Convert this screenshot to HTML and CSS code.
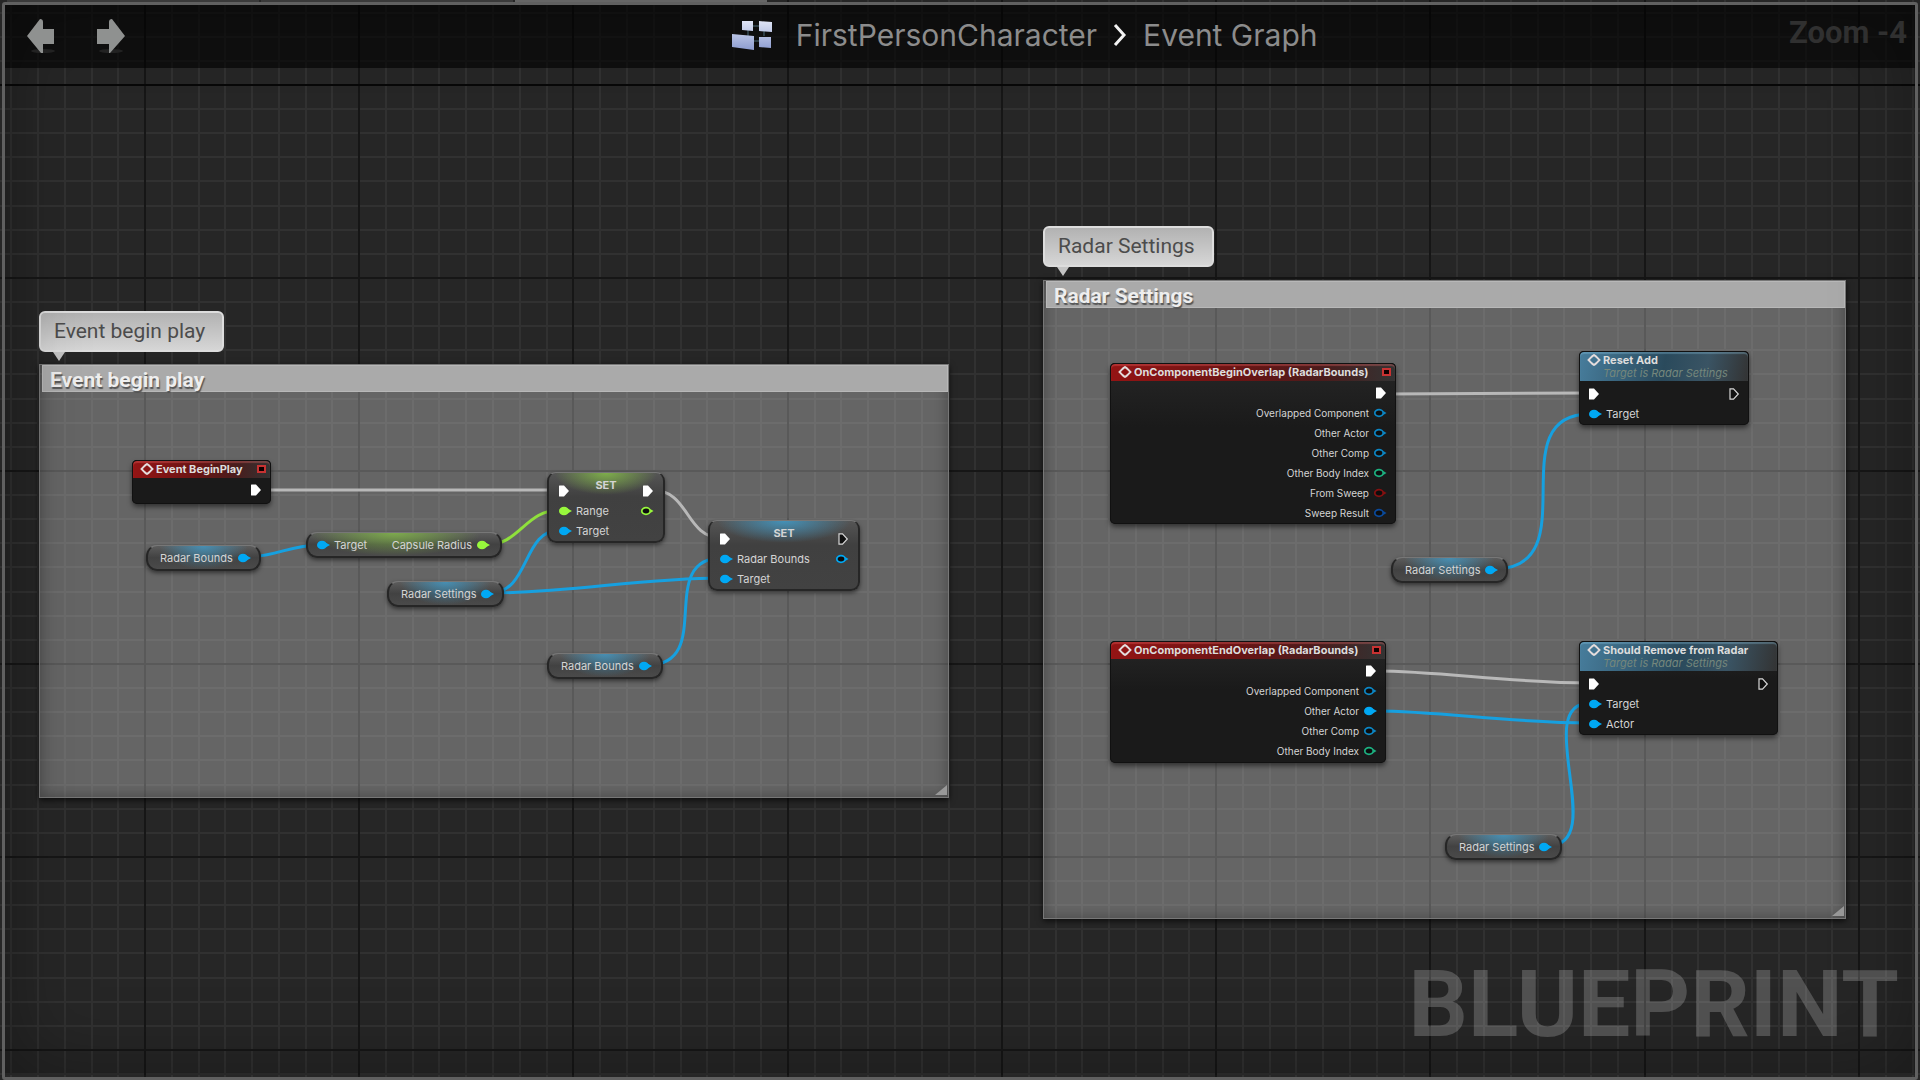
FILE: index.html
```html
<!DOCTYPE html>
<html lang="en">
<head>
<meta charset="utf-8">
<title>FirstPersonCharacter – Event Graph</title>
<link rel="stylesheet" href="styles.css">
</head>
<body>
<svg class="defs" aria-hidden="true">
  <symbol id="exec-on" viewBox="0 0 12 12"><path d="M1.5 .5H6L11 6 6 11.5H1.5Q1 11.500 1 11V1Q1 .5 1.500 .5Z" fill="#fff"/></symbol>
  <symbol id="exec-off" viewBox="0 0 12 12"><path d="M2 .8H5.500L10.300 6 5.500 11.200H2Z" fill="#111" stroke="#d8d8d8" stroke-width="1.200"/></symbol>
  <symbol id="pin-on" viewBox="0 0 14 10"><ellipse cx="6" cy="5" rx="5" ry="4.300" fill="currentColor"/><path d="M9.500 2.500 14 5 9.500 7.500Z" fill="currentColor"/></symbol>
  <symbol id="pin-off" viewBox="0 0 14 10"><ellipse cx="6" cy="5" rx="4.200" ry="3.300" fill="#0d0d0d" stroke="currentColor" stroke-width="1.700"/><path d="M10.300 3 13.500 5 10.300 7Z" fill="currentColor"/></symbol>
  <symbol id="event" viewBox="0 0 14 12"><path d="M6 1.300 1.500 6 6 10.700M8 1.300 12.500 6 8 10.700M4.500 3 7 1 9.500 3M4.500 9 7 11 9.500 9" fill="none" stroke="#e4dcdc" stroke-width="1.900"/></symbol>
</svg>

<main class="editor">
  <div class="tabs"><span></span><span></span><span class="active"></span></div>
  <div class="canvas">
    <svg class="layer" aria-hidden="true">
      <defs>
        <pattern id="grid" x="144" y="84" width="857" height="193" patternUnits="userSpaceOnUse">
          <path class="minor" d="M28 0V193M55 0V193M81 0V193M108 0V193M135 0V193M162 0V193M188 0V193M242 0V193M269 0V193M295 0V193M322 0V193M349 0V193M376 0V193M403 0V193M456 0V193M483 0V193M510 0V193M537 0V193M563 0V193M590 0V193M617 0V193M671 0V193M697 0V193M724 0V193M751 0V193M778 0V193M805 0V193M831 0V193M0 25H857M0 49H857M0 73H857M0 97H857M0 122H857M0 146H857M0 170H857"/>
          <path class="major" d="M1 0V193M215 0V193M429 0V193M644 0V193M0 1H857"/>
        </pattern>
      </defs>
      <rect width="100%" height="100%" fill="url(#grid)"/>
      <rect class="axis" y="84" width="100%" height="2"/>
    </svg>

    <section class="comment c-begin"><h2>Event begin play</h2><svg class="grip" viewBox="0 0 12 10"><path d="M12 0V10H0Z"/></svg></section>
    <p class="bubble b-begin">Event begin play</p>
    <section class="comment c-radar"><h2>Radar Settings</h2><svg class="grip" viewBox="0 0 12 10"><path d="M12 0V10H0Z"/></svg></section>
    <p class="bubble b-radar">Radar Settings</p>

    <svg class="layer wires" aria-hidden="true">
      <g class="exec">
        <path d="M262 490H560"/>
        <path d="M652 490C690 490 685 538 722 538"/>
        <path d="M1386 394L1590 393"/>
        <path d="M1376 671C1440 671 1510 683 1590 683"/>
      </g>
      <path class="float" d="M486 545C520 545 525 510 560 510"/>
      <g class="object">
        <path d="M247 557C275 557 290 545 320 545"/>
        <path d="M490 593C530 593 522 530 560 530"/>
        <path d="M490 593C570 593 640 578 722 578"/>
        <path d="M648 665C716 665 655 558 722 558"/>
        <path d="M1494 569C1590 569 1497 414 1590 414"/>
        <path d="M1376 711C1440 711 1510 723 1590 723"/>
        <path d="M1548 846C1610 846 1530 703 1590 703"/>
      </g>
    </svg>

    <article class="node n-play">
      <header class="red"><svg class="ev"><use href="#event"/></svg><h3>Event BeginPlay</h3><i></i></header>
      <div class="row out"><svg class="ex"><use href="#exec-on"/></svg></div>
    </article>

    <article class="pill n-bounds1"><span>Radar Bounds</span><svg class="pin obj"><use href="#pin-on"/></svg></article>
    <article class="pill green n-capsule"><svg class="pin obj"><use href="#pin-on"/></svg><span>Target</span><span class="end">Capsule Radius</span><svg class="pin flt"><use href="#pin-on"/></svg></article>
    <article class="pill n-settings1"><span>Radar Settings</span><svg class="pin obj"><use href="#pin-on"/></svg></article>
    <article class="pill n-bounds2"><span>Radar Bounds</span><svg class="pin obj"><use href="#pin-on"/></svg></article>
    <article class="pill n-settings2"><span>Radar Settings</span><svg class="pin obj"><use href="#pin-on"/></svg></article>
    <article class="pill n-settings3"><span>Radar Settings</span><svg class="pin obj"><use href="#pin-on"/></svg></article>

    <article class="setter green n-set1">
      <div class="row both"><svg class="ex"><use href="#exec-on"/></svg><h3>SET</h3><svg class="ex"><use href="#exec-on"/></svg></div>
      <div class="row"><svg class="pin flt"><use href="#pin-on"/></svg><span>Range</span><svg class="pin flt last"><use href="#pin-off"/></svg></div>
      <div class="row"><svg class="pin obj"><use href="#pin-on"/></svg><span>Target</span></div>
    </article>
    <article class="setter n-set2">
      <div class="row both"><svg class="ex"><use href="#exec-on"/></svg><h3>SET</h3><svg class="ex"><use href="#exec-off"/></svg></div>
      <div class="row"><svg class="pin obj"><use href="#pin-on"/></svg><span>Radar Bounds</span><svg class="pin obj last"><use href="#pin-off"/></svg></div>
      <div class="row"><svg class="pin obj"><use href="#pin-on"/></svg><span>Target</span></div>
    </article>

    <article class="node n-overlap">
      <header class="red"><svg class="ev"><use href="#event"/></svg><h3>OnComponentBeginOverlap (RadarBounds)</h3><i></i></header>
      <div class="row out"><svg class="ex"><use href="#exec-on"/></svg></div>
      <div class="row out"><span>Overlapped Component</span><svg class="pin dim"><use href="#pin-off"/></svg></div>
      <div class="row out"><span>Other Actor</span><svg class="pin dim"><use href="#pin-off"/></svg></div>
      <div class="row out"><span>Other Comp</span><svg class="pin dim"><use href="#pin-off"/></svg></div>
      <div class="row out"><span>Other Body Index</span><svg class="pin int"><use href="#pin-off"/></svg></div>
      <div class="row out"><span>From Sweep</span><svg class="pin bool"><use href="#pin-off"/></svg></div>
      <div class="row out"><span>Sweep Result</span><svg class="pin struct"><use href="#pin-off"/></svg></div>
    </article>
    <article class="node n-end">
      <header class="red"><svg class="ev"><use href="#event"/></svg><h3>OnComponentEndOverlap (RadarBounds)</h3><i></i></header>
      <div class="row out"><svg class="ex"><use href="#exec-on"/></svg></div>
      <div class="row out"><span>Overlapped Component</span><svg class="pin dim"><use href="#pin-off"/></svg></div>
      <div class="row out"><span>Other Actor</span><svg class="pin obj"><use href="#pin-on"/></svg></div>
      <div class="row out"><span>Other Comp</span><svg class="pin dim"><use href="#pin-off"/></svg></div>
      <div class="row out"><span>Other Body Index</span><svg class="pin int"><use href="#pin-off"/></svg></div>
    </article>

    <article class="node n-reset">
      <header class="blue"><svg class="ev"><use href="#event"/></svg><div><h3>Reset Add</h3><p>Target is Radar Settings</p></div></header>
      <div class="row both"><svg class="ex"><use href="#exec-on"/></svg><svg class="ex"><use href="#exec-off"/></svg></div>
      <div class="row"><svg class="pin obj"><use href="#pin-on"/></svg><span>Target</span></div>
    </article>
    <article class="node n-remove">
      <header class="blue"><svg class="ev"><use href="#event"/></svg><div><h3>Should Remove from Radar</h3><p>Target is Radar Settings</p></div></header>
      <div class="row both"><svg class="ex"><use href="#exec-on"/></svg><svg class="ex"><use href="#exec-off"/></svg></div>
      <div class="row"><svg class="pin obj"><use href="#pin-on"/></svg><span>Target</span></div>
      <div class="row"><svg class="pin obj"><use href="#pin-on"/></svg><span>Actor</span></div>
    </article>
    <div class="vignette"></div>
  </div>

  <header class="bar">
    <div class="history">
      <button type="button" aria-label="Back"><svg viewBox="0 0 30 36"><ellipse cx="17" cy="32" rx="12" ry="2" fill="#222"/><path d="M1 17 14 0Q17 0 17 3V10H28V25H17V34H15Z"/></svg></button>
      <button type="button" aria-label="Forward"><svg viewBox="0 0 30 36"><ellipse cx="15" cy="32" rx="12" ry="2" fill="#222"/><path d="M29 17 16 0Q13 0 13 3V10H1V25H13V34H14Z"/></svg></button>
    </div>
    <nav class="crumbs" aria-label="Breadcrumb">
      <svg class="logo" viewBox="0 0 40 30" aria-hidden="true">
        <defs><linearGradient id="tile" x1="0" y1="0" x2="0" y2="1"><stop offset="0" stop-color="#dfe4f5"/><stop offset="1" stop-color="#8c9cd0"/></linearGradient></defs>
        <path d="M16 10V16M32 10V16M20 6H27M20 21H27" stroke="#4b6a78" stroke-width="1"/>
        <path d="M10 1 21 1V11L10 10ZM27 1 40 2V12L27 11ZM0 14 22 16V30L0 27ZM27 17H39V28L27 27Z" fill="url(#tile)"/>
      </svg>
      <a href="#">FirstPersonCharacter</a>
      <svg class="chev" viewBox="0 0 14 22" aria-hidden="true"><path d="M2 1 11 11 2 21"/></svg>
      <a href="#">Event Graph</a>
    </nav>
    <span class="zoom">Zoom -4</span>
  </header>
  <p class="watermark">BLUEPRINT</p>
</main>
</body>
</html>
```
FILE: styles.css
```css
* { box-sizing: border-box; }
body { margin: 0; background: #1c1c1c; font-family: Inter, "Liberation Sans", sans-serif; }
h2, h3, p { margin: 0; }
.defs { position: absolute; width: 0; height: 0; }

.editor {
  position: relative;
  display: flex;
  flex-direction: column;
  justify-content: space-between;
  min-height: 100vh;
  padding: 5px;
  overflow: hidden;
}
.editor::after {
  content: "";
  position: absolute;
  inset: 2px 2px 0 2px;
  border: 3px solid #606060;
  border-radius: 3px;
  pointer-events: none;
}
.tabs { position: absolute; inset: 0 0 auto 7px; display: flex; gap: 2px; height: 2px; z-index: 1; }
.tabs span { width: 252px; background: #3a3a3a; }
.tabs .active { background: #666; }

.canvas { position: absolute; inset: 0; background: #262626; }
.layer { position: absolute; inset: 0; width: 100%; height: 100%; }
.minor { stroke: #313131; stroke-width: 2px; }
.major { stroke: #161616; stroke-width: 2px; }
.axis { fill: #080808; }
.vignette { position: absolute; inset: 5px; box-shadow: inset 0 0 80px rgba(0, 0, 0, .35); pointer-events: none; }

/* Top bar */
.bar {
  position: relative;
  display: grid;
  grid-template-columns: 38% 1fr auto;
  align-items: center;
  height: 63px;
  padding-right: 8px;
  background: rgba(0, 0, 0, .6);
}
.history { display: flex; gap: 40px; padding-left: 21px; }
.history button { padding: 0; border: 0; background: none; }
.history svg { display: block; width: 30px; height: 36px; fill: #8f9190; }
.crumbs { display: flex; align-items: center; padding: 0 0 4px 4px; }
.crumbs a { color: #8c8c8c; font-size: 30px; line-height: 32px; text-decoration: none; }
.logo { width: 40px; height: 30px; margin-right: 24px; }
.chev { width: 14px; height: 22px; margin: 0 16px; fill: none; stroke: #f2f2f2; stroke-width: 3px; }
.zoom { padding-bottom: 8px; color: #303030; font: 700 31px/32px Roboto, sans-serif; }

.watermark {
  position: relative;
  align-self: flex-end;
  margin: 0 16px 14px 0;
  color: rgba(255, 255, 255, .2);
  font: 700 93px/112px Roboto, sans-serif;
}

/* Comments */
.comment {
  position: absolute;
  border: 1px solid #777;
  background: rgba(255, 255, 255, .29);
  box-shadow: 0 2px 6px rgba(0, 0, 0, .7), inset 0 0 14px rgba(0, 0, 0, .3);
}
.comment h2 {
  height: 27px;
  margin-left: 2px;
  padding-left: 7px;
  border: 1px solid #b8b8b8;
  background: #aaa;
  color: #eee;
  font: 700 21px/28px Roboto, sans-serif;
  text-shadow: 1px 2px 1px #555;
}
.grip { position: absolute; right: 1px; bottom: 2px; width: 12px; height: 10px; fill: #999; }
.c-begin { left: 39px; top: 364px; width: 910px; height: 434px; }
.c-radar { left: 1043px; top: 280px; width: 803px; height: 639px; }
.bubble {
  position: absolute;
  height: 41px;
  padding: 0 13px;
  border: 2px solid #ddd;
  border-radius: 6px;
  background: linear-gradient(#b2b2b2, #d6d6d6);
  color: #4c4c4c;
  font: 400 21px/37px Roboto, sans-serif;
  white-space: nowrap;
}
.bubble::after {
  content: "";
  position: absolute;
  left: 12px;
  top: 39px;
  border: 6px solid transparent;
  border-top: 9px solid #c4c4c4;
  border-bottom: 0;
}
.b-begin { left: 39px; top: 311px; width: 185px; }
.b-radar { left: 1043px; top: 226px; width: 171px; }

/* Wires */
.wires { fill: none; stroke-width: 3px; }
.exec { stroke: #b8b8b8; }
.float { stroke: #8fe03c; }
.object { stroke: #16a0e0; }

/* Nodes */
.node, .setter, .pill { position: absolute; color: #d4d4d4; font-size: 11px; line-height: 20px; white-space: nowrap; }
.node h3, .setter h3 { font-size: 11px; font-weight: 700; }
.node {
  border-radius: 5px;
  background: linear-gradient(#262626, #1a1a1a 40%);
  box-shadow: inset 0 0 0 1px #111, 0 3px 5px rgba(0, 0, 0, .5);
}
.node header {
  display: flex;
  gap: 2px;
  padding: 0 9px 0 7px;
  border: 1px solid #111;
  border-bottom: 0;
  border-radius: 5px 5px 0 0;
}
.node header.red {
  align-items: center;
  height: 18px;
  padding-bottom: 1px;
  background: linear-gradient(90deg, #941414, #6a1414 45%, #4a1c1c 75%, #333);
  box-shadow: inset 0 2px 1px rgba(255, 120, 120, .3);
}
.node header.blue {
  height: 30px;
  margin-bottom: 3px;
  padding-top: 2px;
  background: linear-gradient(100deg, #477d9c, #2a4a5c 50%, #3a5464 75%, #333);
  box-shadow: inset 0 2px 1px rgba(150, 210, 240, .3);
}
.node header h3 { color: #ddd; line-height: 12px; }
.node header p { color: #75877c; font-size: 11px; font-style: italic; line-height: 14px; }
.red + .row { margin-top: 2px; }
.ev { width: 14px; height: 12px; flex: none; }
.node i { width: 9px; height: 8px; margin-left: auto; margin-right: -5px; border: 2px solid #c83232; background: #100; }
.row { display: flex; align-items: center; gap: 4px; height: 20px; padding: 0 9px; }
.row.out { justify-content: flex-end; font-size: 10px; }
.row.both { justify-content: space-between; }
.ex { width: 12px; height: 12px; flex: none; }
.pin { width: 14px; height: 10px; flex: none; }
.last { margin-left: auto; }
.obj { color: #00a8f4; }
.dim { color: #0c86c4; }
.flt { color: #98f83c; }
.int { color: #1cb080; }
.bool { color: #861010; }
.struct { color: #0a4a9c; }

.setter, .pill {
  border: 2px solid #262626;
  border-top: 1px solid #777;
  background:
    radial-gradient(ellipse 40% 100% at 50% 0, rgba(64, 160, 208, .75), transparent),
    linear-gradient(#5c5c5c, #424242 50%, #4a4a4a);
  box-shadow: 0 2px 4px rgba(0, 0, 0, .5);
}
.pill { display: flex; align-items: center; gap: 4px; height: 26px; padding: 0 10px 0 12px; border-radius: 11px; }
.pill .pin { margin-left: auto; }
.pill.green { padding: 0 10px 0 8px; }
.pill.green .pin { margin: 0; }
.pill .end { margin-left: auto; }
.pill.green { background: radial-gradient(ellipse 45% 100% at 45% 0, rgba(136, 196, 72, .75), transparent), linear-gradient(#5c5c5c, #424242 50%, #4a4a4a); }
.setter { height: 71px; padding-top: 8px; border-radius: 9px; background: radial-gradient(ellipse 45% 32% at 50% 0, rgba(64, 160, 208, .8), transparent), linear-gradient(#555, #404040 35%, #424242); }
.setter.green { background: radial-gradient(ellipse 45% 32% at 50% 0, rgba(136, 196, 72, .8), transparent), linear-gradient(#555, #404040 35%, #424242); }
.setter h3 { align-self: flex-start; line-height: 8px; }

.n-play { left: 132px; top: 460px; width: 139px; height: 44px; }
.n-bounds1 { left: 146px; top: 545px; width: 115px; }
.n-capsule { left: 306px; top: 532px; width: 196px; }
.n-settings1 { left: 387px; top: 581px; width: 117px; }
.n-bounds2 { left: 547px; top: 653px; width: 116px; }
.n-settings2 { left: 1391px; top: 557px; width: 117px; }
.n-settings3 { left: 1445px; top: 834px; width: 117px; }
.n-set1 { left: 547px; top: 472px; width: 118px; }
.n-set2 { left: 708px; top: 520px; width: 152px; }
.n-overlap { left: 1110px; top: 363px; width: 286px; height: 161px; }
.n-end { left: 1110px; top: 641px; width: 276px; height: 122px; }
.n-reset { left: 1579px; top: 351px; width: 170px; height: 74px; }
.n-remove { left: 1579px; top: 641px; width: 199px; height: 94px; }
```
